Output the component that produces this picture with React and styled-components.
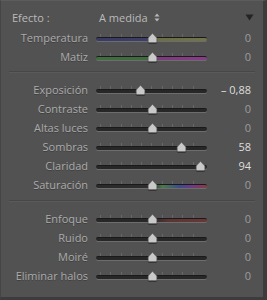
import React from 'react';
import styled, { createGlobalStyle } from 'styled-components';

const GlobalStyle = createGlobalStyle`
  html, body {
    margin: 0;
    padding: 0;
    background: #525252;
  }
  * { box-sizing: border-box; }
`;

// colour ramps for the tinted tracks
const TINTS = {
  plain: '#272727',
  temp: 'linear-gradient(to right, #3a3a66 0%, #3e3e6a 50%, #6c6c46 50%, #74744a 100%)',
  tint: 'linear-gradient(to right, #3f6e3f 0%, #3f6a3f 50%, #7a3a7a 50%, #8a3c8a 100%)',
  sat: 'linear-gradient(to right, #2a2a2a 0%, #2e2e2e 50%, #4a7a4a 60%, #3c4c8a 75%, #6a3a8a 85%, #8a3a44 100%)',
  sharp: 'linear-gradient(to right, #272727 0%, #272727 50%, #5a3434 65%, #6a3636 100%)',
};

const Panel = styled.div`
  width: 267px;
  height: 300px;
  background: #525252;
  border-left: 1px solid #454545;
  border-top: 1px solid #5c5c5c;
  border-right: 4px solid #3c3c3c;
  border-bottom: 3px solid #3c3c3c;
  padding-top: 7px;
  font-family: 'Open Sans', 'Liberation Sans', sans-serif;
  font-size: 11px;
  color: #ababab;
  display: flex;
  flex-direction: column;
`;

const Header = styled.div`
  height: 18px;
  display: flex;
  align-items: center;
  padding: 0 9px 0 11px;
  color: #bababa;
`;

const EffectLabel = styled.span`
  width: 87px;
`;

const Preset = styled.span`
  display: flex;
  align-items: center;
  gap: 6px;
  flex: 1;
`;

const Section = styled.div`
  display: flex;
  flex-direction: column;
  padding: ${(p) => p.pad || '7px 0 6px'};
`;

const Divider = styled.div`
  margin: 0 8px;
  height: 2px;
  border-top: 1px solid #474747;
  border-bottom: 1px solid #5a5a5a;
`;

const Row = styled.div`
  height: 19px;
  display: grid;
  grid-template-columns: 87px 111px 36px;
  column-gap: 8px;
  align-items: center;
`;

const Label = styled.span`
  text-align: right;
  white-space: nowrap;
  text-shadow: 0 1px 0 rgba(0, 0, 0, 0.25);
`;

const Slider = styled.div`
  position: relative;
  height: 19px;
`;

const Ticks = styled.div`
  position: absolute;
  left: 4px;
  right: 4px;
  top: 6px;
  height: 3px;
  background: repeating-linear-gradient(
    to right,
    rgba(255, 255, 255, 0.12) 0 1px,
    transparent 1px 10.3px
  );
`;

const Track = styled.div`
  position: absolute;
  left: 0;
  right: 0;
  top: 9px;
  height: 4px;
  border-radius: 2px;
  background: ${(p) => TINTS[p.tint] || TINTS.plain};
  border-top: 1px solid #1a1a1a;
  box-shadow: 0 1px 0 rgba(255, 255, 255, 0.16);
`;

const Thumb = styled.svg`
  position: absolute;
  top: 5px;
  width: 11px;
  height: 10px;
  margin-left: -5.5px;
  filter: drop-shadow(0 1px 0.5px rgba(0, 0, 0, 0.45));
`;

const Value = styled.span`
  text-align: right;
  color: ${(p) => (p.bright ? '#dedede' : '#9c9c9c')};
`;

const Collapse = styled.svg`
  width: 9px;
  height: 7px;
`;

const sections = [
  [
    { label: 'Temperatura', pos: 0.505, value: '0', tint: 'temp' },
    { label: 'Matiz', pos: 0.505, value: '0', tint: 'tint' },
  ],
  [
    { label: 'Exposición', pos: 0.405, value: '\u2013 0,88', bright: true },
    { label: 'Contraste', pos: 0.513, value: '0' },
    { label: 'Altas luces', pos: 0.513, value: '0' },
    { label: 'Sombras', pos: 0.766, value: '58', bright: true },
    { label: 'Claridad', pos: 0.937, value: '94', bright: true },
    { label: 'Saturación', pos: 0.513, value: '0', tint: 'sat' },
  ],
  [
    { label: 'Enfoque', pos: 0.513, value: '0', tint: 'sharp' },
    { label: 'Ruido', pos: 0.513, value: '0' },
    { label: 'Moiré', pos: 0.513, value: '0' },
    { label: 'Eliminar halos', pos: 0.513, value: '0' },
  ],
];

const SliderRow = ({ label, pos, value, tint, bright }) => (
  <Row>
    <Label>{label}</Label>
    <Slider>
      <Ticks />
      <Track tint={tint} />
      <Thumb viewBox="0 0 11 10" style={{ left: `${pos * 100}%` }}>
        <path d="M5.5 0.5 L9.8 5 L9.8 8.6 Q9.8 9.5 8.9 9.5 L2.1 9.5 Q1.2 9.5 1.2 8.6 L1.2 5 Z" fill="#c9c9c9" stroke="#6a6a6a" strokeWidth="0.6" />
      </Thumb>
    </Slider>
    <Value bright={bright}>{value}</Value>
  </Row>
);

const UpDown = () => (
  <svg width="6" height="9" viewBox="0 0 6 9">
    <path d="M3 0.5 L5.5 3.5 L0.5 3.5 Z M3 8.5 L5.5 5.5 L0.5 5.5 Z" fill="#b8b8b8" />
  </svg>
);

export default function App() {
  return (
    <>
      <GlobalStyle />
      <Panel>
        <Header>
          <EffectLabel>Efecto :</EffectLabel>
          <Preset>
            A medida <UpDown />
          </Preset>
          <Collapse viewBox="0 0 9 7">
            <path d="M0.5 0.5 L8.5 0.5 L4.5 6.5 Z" fill="#242424" />
          </Collapse>
        </Header>
        <Section pad="2px 0 5px">
          {sections[0].map((r) => (
            <SliderRow key={r.label} {...r} />
          ))}
        </Section>
        <Divider />
        <Section>
          {sections[1].map((r) => (
            <SliderRow key={r.label} {...r} />
          ))}
        </Section>
        <Divider />
        <Section>
          {sections[2].map((r) => (
            <SliderRow key={r.label} {...r} />
          ))}
        </Section>
      </Panel>
    </>
  );
}
